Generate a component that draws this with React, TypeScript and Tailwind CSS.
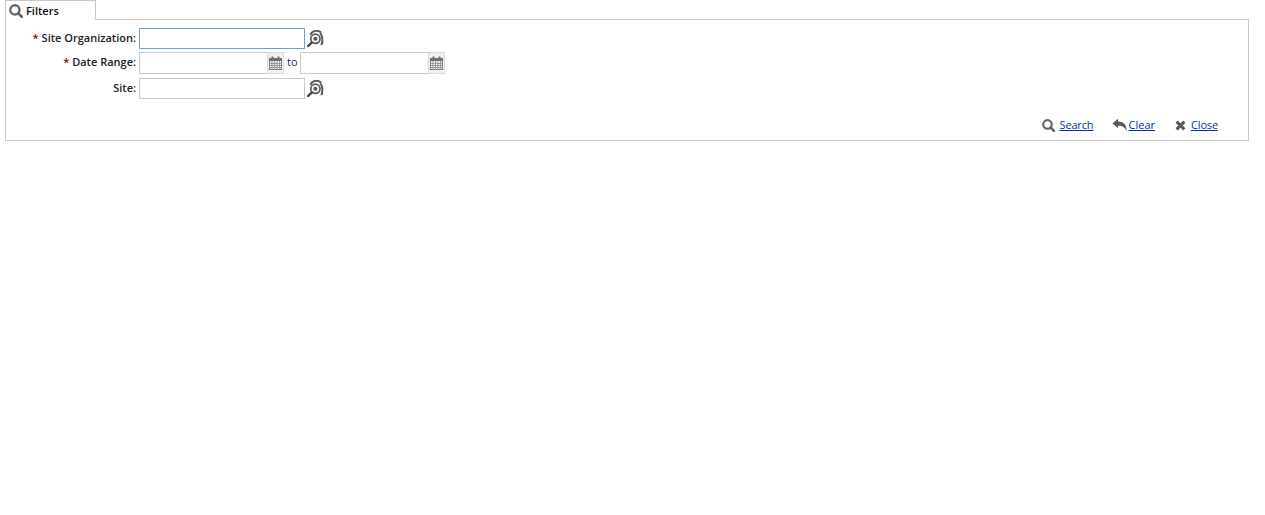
const FONT = "font-['Open_Sans',sans-serif]";

function SearchIcon({ size = 14 }: { size?: number }) {
  return (
    <svg width={size} height={size} viewBox="0 0 14 14" fill="none" className="shrink-0">
      <circle cx="5.9" cy="5.9" r="4.6" stroke="#666666" strokeWidth="2.4" />
      <path d="M9.2 9.2 L12.8 12.8" stroke="#666666" strokeWidth="2.8" strokeLinecap="round" />
    </svg>
  );
}

function LookupIcon() {
  return (
    <svg width="17" height="17" viewBox="0 0 17 17" fill="none" className="shrink-0">
      <path d="M3.4 5 C4.6 2 7 0.8 9.5 0.8 C11.6 0.8 13 1.4 14.2 2.6" stroke="#5a5a5a" strokeWidth="1.9" />
      <path d="M13.6 2.4 C16.4 4.6 16.8 10 16 14.6 L13.4 15.4 C14.8 11 14.8 6.4 12.4 3.8 Z" fill="#5a5a5a" />
      <circle cx="8.4" cy="8.8" r="4.6" stroke="#5a5a5a" strokeWidth="1.7" fill="#f4f4f4" />
      <circle cx="8.4" cy="8.8" r="2" fill="#555555" />
      <path d="M4.6 12.6 L1.2 16" stroke="#444444" strokeWidth="2.4" strokeLinecap="round" />
    </svg>
  );
}

function CalendarIcon() {
  return (
    <svg width="13" height="14" viewBox="0 0 13 14" className="shrink-0">
      <rect x="0.5" y="2.5" width="12" height="11" fill="#f4f4f4" stroke="#707070" />
      <rect x="0" y="2" width="13" height="3" fill="#707070" />
      <rect x="2.5" y="0.5" width="2" height="3" fill="#707070" />
      <rect x="8.5" y="0.5" width="2" height="3" fill="#707070" />
      <path d="M0 7.5H13M0 9.5H13M0 11.5H13M3 5V14M5.5 5V14M8 5V14M10.5 5V14" stroke="#9a9a9a" strokeWidth="1" />
    </svg>
  );
}

function ClearIcon() {
  return (
    <svg width="15" height="14" viewBox="0 0 15 14" className="shrink-0">
      <path d="M0.3 5.4 L6 0.8 V3.4 C11 3.4 14.8 6 14.6 13.4 C13.2 9.2 10.6 7.8 6 7.8 V10 Z" fill="#595959" />
    </svg>
  );
}

function CloseIcon() {
  return (
    <svg width="11" height="11" viewBox="0 0 11 11" className="shrink-0">
      <path d="M1.6 1.6 L9.4 9.4 M9.4 1.6 L1.6 9.4" stroke="#595959" strokeWidth="3" />
    </svg>
  );
}

function Label({ text, required }: { text: string; required?: boolean }) {
  return (
    <label className="w-[128px] shrink-0 text-right text-[11px] font-semibold text-[#222222] mr-[3px]">
      {required ? <span className="text-[#990000] mr-[3px]">*</span> : null}
      {text}:
    </label>
  );
}

function DateField() {
  return (
    <div className="flex h-[22px]">
      <input className="w-[128px] h-full border border-[#c8c8c8] border-r-0 bg-white outline-none" />
      <div className="w-[17px] h-full flex items-center justify-center border border-[#dcdcdc] bg-[#f0f0f0]">
        <CalendarIcon />
      </div>
    </div>
  );
}

export default function App() {
  return (
    <div className={`${FONT} min-h-[515px] bg-white pl-[5px] pr-[16px] text-[11px]`}>
      <div className="relative z-10 flex h-[20px] w-[91px] items-center gap-[3px] border-x border-t border-[#c8c8c8] bg-white pl-[3px] pt-[1px]">
        <SearchIcon />
        <span className="text-[11px] font-semibold text-[#111111]">Filters</span>
      </div>
      <div className="-mt-[1px] h-[122px] border border-[#c8c8c8] pt-[8px] pl-[2px] pr-[30px]">
        <div className="flex h-[21px] items-center">
          <Label text="Site Organization" required />
          <input className="w-[166px] h-full border border-[#66a3d9] bg-white outline-none" />
          <div className="ml-[2px]">
            <LookupIcon />
          </div>
        </div>
        <div className="mt-[3px] flex h-[22px] items-center">
          <div className="flex items-center pb-[2px]">
            <Label text="Date Range" required />
          </div>
          <DateField />
          <span className="mx-[3px] w-[10px] pb-[2px] text-[11px] text-[#1f2a5a]">to</span>
          <DateField />
        </div>
        <div className="mt-[4px] flex h-[21px] items-center">
          <Label text="Site" />
          <input className="w-[166px] h-full border border-[#c8c8c8] bg-white outline-none" />
          <div className="ml-[2px]">
            <LookupIcon />
          </div>
        </div>
        <div className="mt-[18px] flex justify-end gap-[20px] text-[11px]">
          <div className="mr-[-2px] flex items-center gap-[5px]">
            <SearchIcon size={13} />
            <a className="w-[34px] whitespace-nowrap tracking-[-0.15px] text-[#0033a0] underline">Search</a>
          </div>
          <div className="flex items-center gap-[2px]">
            <ClearIcon />
            <a className="text-[#0033a0] underline">Clear</a>
          </div>
          <div className="flex items-center gap-[5px]">
            <CloseIcon />
            <a className="w-[27px] whitespace-nowrap tracking-[-0.15px] text-[#0033a0] underline">Close</a>
          </div>
        </div>
      </div>
    </div>
  );
}
